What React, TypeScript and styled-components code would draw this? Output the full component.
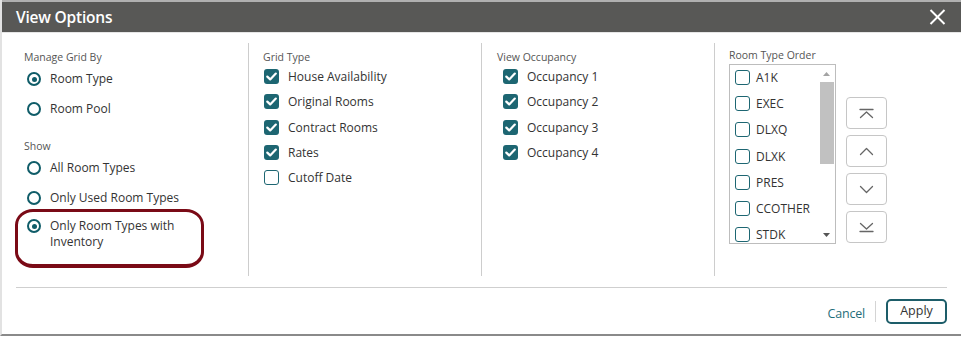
import React from "react";
import styled, { createGlobalStyle } from "styled-components";

const Global = createGlobalStyle`
  html, body { margin: 0; padding: 0; background: #fff; }
  body { font-family: "Open Sans", "Noto Sans", sans-serif; color: #333; }
  * { box-sizing: border-box; }
`;

const Dialog = styled.div`
  width: 961px;
  height: 336px;
  border-left: 2px solid #e2e2e2;
  border-bottom: 2px solid #8a8a8a;
  background: #fff;
  display: flex;
  flex-direction: column;
`;

const Header = styled.div`
  height: 33px;
  flex: none;
  background: #585856;
  border-top: 2px solid #b0b0b0;
  border-bottom: 1px solid #e6e6e6;
  display: flex;
  align-items: center;
  justify-content: space-between;
  padding: 0 15px 0 14px;
`;

const Title = styled.h1`
  margin: 0;
  font-size: 15.5px;
  font-weight: 600;
  color: #fff;
  letter-spacing: -0.2px;
`;

const CloseButton = styled.button`
  border: 0;
  background: none;
  padding: 0;
  width: 17px;
  height: 17px;
  display: flex;
  align-items: center;
  justify-content: center;
  cursor: pointer;
`;

const Body = styled.div`
  padding: 10px 14px 0 14px;
  display: flex;
  flex-direction: column;
`;

const Columns = styled.div`
  display: grid;
  grid-template-columns: 232px 233px 233px 233px;
  height: 233px;
`;

const Column = styled.div<{ $divider?: boolean; $pad: number; $top: number }>`
  border-left: ${(p) => (p.$divider ? "1px solid #cdcdcd" : "none")};
  padding: ${(p) => p.$top}px 0 0 ${(p) => p.$pad}px;
  display: flex;
  flex-direction: column;
`;

const SectionLabel = styled.div<{ $top?: number }>`
  font-size: 10.5px;
  line-height: 13px;
  height: 13px;
  color: #555;
  margin-top: ${(p) => p.$top ?? 0}px;
`;

const RadioRow = styled.label<{ $multi?: boolean }>`
  position: relative;
  display: flex;
  align-items: ${(p) => (p.$multi ? "flex-start" : "center")};
  gap: 9px;
  height: ${(p) => (p.$multi ? "auto" : "30px")};
  padding: ${(p) => (p.$multi ? "5px 0 0 3px" : "0 0 0 3px")};
  font-size: 12px;
  line-height: 16px;
  color: #333;
`;

const RadioCircle = styled.span<{ $checked?: boolean; $multi?: boolean }>`
  flex: none;
  width: 14px;
  height: 14px;
  border-radius: 50%;
  border: 2.4px solid #0f5c68;
  display: flex;
  align-items: center;
  justify-content: center;
  margin-top: ${(p) => (p.$multi ? "1px" : "0")};
  &::after {
    content: "";
    width: 5px;
    height: 5px;
    border-radius: 50%;
    background: ${(p) => (p.$checked ? "#0f5c68" : "transparent")};
  }
`;

const RadioText = styled.span`
  max-width: 140px;
`;

const Annotation = styled.span`
  position: absolute;
  left: -9px;
  top: -4px;
  width: 189px;
  height: 59px;
  border: 3.5px solid #7a0a16;
  border-bottom-width: 4px;
  border-radius: 18px / 16px;
  pointer-events: none;
`;

const CheckRow = styled.label<{ $indent: number }>`
  display: flex;
  align-items: center;
  gap: 9px;
  height: 25.3px;
  padding-left: ${(p) => p.$indent}px;
  font-size: 12px;
  color: #333;
`;

const Box = styled.span<{ $checked?: boolean }>`
  flex: none;
  width: 15px;
  height: 15px;
  border-radius: 3px;
  background: ${(p) => (p.$checked ? "#1d6672" : "#fff")};
  border: ${(p) => (p.$checked ? "none" : "1.5px solid #1d6672")};
  display: flex;
  align-items: center;
  justify-content: center;
`;

const OrderArea = styled.div`
  display: flex;
  margin-top: 2px;
`;

const ListBox = styled.div`
  width: 107px;
  height: 180px;
  border: 1px solid #bdbdbd;
  display: flex;
  background: #fff;
`;

const ListItems = styled.div`
  flex: 1;
  overflow: hidden;
  padding-top: 0;
  margin-top: -1px;
`;

const ListItem = styled.label`
  display: flex;
  align-items: center;
  gap: 6px;
  height: 26.3px;
  padding-left: 5px;
  font-size: 12px;
  color: #333;
`;

const ScrollBar = styled.div`
  width: 17px;
  display: flex;
  flex-direction: column;
  background: #fff;
`;

const ScrollArrow = styled.div`
  height: 17px;
  display: flex;
  align-items: center;
  justify-content: center;
`;

const ScrollTrack = styled.div`
  flex: 1;
  display: flex;
  justify-content: center;
`;

const Thumb = styled.div`
  width: 14px;
  height: 82px;
  background: #c1c1c1;
`;

const MoveButtons = styled.div`
  align-self: flex-end;
  margin: 0 0 1px 10px;
  display: flex;
  flex-direction: column;
  gap: 6px;
`;

const MoveButton = styled.button`
  width: 41px;
  height: 32px;
  border: 1px solid #c6c6c6;
  border-radius: 4px;
  background: #fff;
  display: flex;
  align-items: center;
  justify-content: center;
  padding: 0;
`;

const Separator = styled.hr`
  margin: 11px 0 0 0;
  border: 0;
  border-top: 1px solid #cfcfcf;
  height: 0;
`;

const Footer = styled.div`
  height: 46px;
  display: flex;
  align-items: center;
  justify-content: flex-end;
  padding-right: 14px;
`;

const CancelLink = styled.a`
  font-size: 12.5px;
  color: #1f6e7a;
  margin-top: 5px;
  text-decoration: none;
  letter-spacing: -0.2px;
`;

const FooterDivider = styled.span`
  width: 1px;
  height: 21px;
  background: #d4d4d4;
  margin: 0 10px;
`;

const ApplyButton = styled.button`
  width: 61px;
  height: 25px;
  border: 2px solid #1d5d69;
  border-radius: 5px;
  background: #fff;
  font-family: inherit;
  font-size: 12.5px;
  color: #333;
  padding: 0 0 2px 0;
`;

const Check = () => (
  <svg width="11" height="9" viewBox="0 0 11 9">
    <polyline points="1.3,4.6 4.2,7.4 9.8,1.6" fill="none" stroke="#fff" strokeWidth="2.2" strokeLinecap="round" strokeLinejoin="round" />
  </svg>
);

const Tri = ({ up }: { up?: boolean }) => (
  <svg width="7" height="4" viewBox="0 0 7 4">
    <polygon points={up ? "0,4 7,4 3.5,0" : "0,0 7,0 3.5,4"} fill={up ? "#a3a3a3" : "#555"} />
  </svg>
);

type Mv = "top" | "up" | "down" | "bottom";
const MoveIcon = ({ kind }: { kind: Mv }) => {
  const s = { fill: "none", stroke: "#666", strokeWidth: 1.3, strokeLinecap: "round" as const, strokeLinejoin: "round" as const };
  return (
    <svg width="15" height="11" viewBox="0 0 15 11">
      {kind === "top" && (
        <>
          <line x1="1" y1="1.5" x2="14" y2="1.5" {...s} />
          <polyline points="1.5,9.5 7.5,4 13.5,9.5" {...s} />
        </>
      )}
      {kind === "up" && <polyline points="1.5,8.5 7.5,2.5 13.5,8.5" {...s} />}
      {kind === "down" && <polyline points="1.5,2.5 7.5,8.5 13.5,2.5" {...s} />}
      {kind === "bottom" && (
        <>
          <polyline points="1.5,1.5 7.5,7 13.5,1.5" {...s} />
          <line x1="1" y1="9.5" x2="14" y2="9.5" {...s} />
        </>
      )}
    </svg>
  );
};

const gridTypes = [
  { label: "House Availability", checked: true },
  { label: "Original Rooms", checked: true },
  { label: "Contract Rooms", checked: true },
  { label: "Rates", checked: true },
  { label: "Cutoff Date", checked: false },
];

const occupancies = ["Occupancy 1", "Occupancy 2", "Occupancy 3", "Occupancy 4"];
const roomTypes = ["A1K", "EXEC", "DLXQ", "DLXK", "PRES", "CCOTHER", "STDK"];

export default function App() {
  return (
    <>
      <Global />
      <Dialog>
        <Header>
          <Title>View Options</Title>
          <CloseButton aria-label="Close">
            <svg width="17" height="16" viewBox="0 0 17 16">
              <line x1="1.5" y1="1" x2="15.5" y2="15" stroke="#fff" strokeWidth="2" />
              <line x1="15.5" y1="1" x2="1.5" y2="15" stroke="#fff" strokeWidth="2" />
            </svg>
          </CloseButton>
        </Header>
        <Body>
          <Columns>
            <Column $pad={8} $top={8}>
              <SectionLabel>Manage Grid By</SectionLabel>
              <RadioRow>
                <RadioCircle $checked />
                <RadioText>Room Type</RadioText>
              </RadioRow>
              <RadioRow>
                <RadioCircle />
                <RadioText>Room Pool</RadioText>
              </RadioRow>
              <SectionLabel $top={16}>Show</SectionLabel>
              <RadioRow>
                <RadioCircle />
                <RadioText>All Room Types</RadioText>
              </RadioRow>
              <RadioRow>
                <RadioCircle />
                <RadioText>Only Used Room Types</RadioText>
              </RadioRow>
              <RadioRow $multi>
                <RadioCircle $checked $multi />
                <RadioText>Only Room Types with Inventory</RadioText>
                <Annotation />
              </RadioRow>
            </Column>
            <Column $divider $pad={14} $top={8}>
              <SectionLabel>Grid Type</SectionLabel>
              {gridTypes.map((g) => (
                <CheckRow key={g.label} $indent={1}>
                  <Box $checked={g.checked}>{g.checked && <Check />}</Box>
                  {g.label}
                </CheckRow>
              ))}
            </Column>
            <Column $divider $pad={15} $top={8}>
              <SectionLabel>View Occupancy</SectionLabel>
              {occupancies.map((o) => (
                <CheckRow key={o} $indent={6}>
                  <Box $checked>
                    <Check />
                  </Box>
                  {o}
                </CheckRow>
              ))}
            </Column>
            <Column $divider $pad={14} $top={6}>
              <SectionLabel>Room Type Order</SectionLabel>
              <OrderArea>
                <ListBox>
                  <ListItems>
                    {roomTypes.map((r) => (
                      <ListItem key={r}>
                        <Box />
                        {r}
                      </ListItem>
                    ))}
                  </ListItems>
                  <ScrollBar>
                    <ScrollArrow>
                      <Tri up />
                    </ScrollArrow>
                    <ScrollTrack>
                      <Thumb />
                    </ScrollTrack>
                    <ScrollArrow>
                      <Tri />
                    </ScrollArrow>
                  </ScrollBar>
                </ListBox>
                <MoveButtons>
                  <MoveButton aria-label="Move to top"><MoveIcon kind="top" /></MoveButton>
                  <MoveButton aria-label="Move up"><MoveIcon kind="up" /></MoveButton>
                  <MoveButton aria-label="Move down"><MoveIcon kind="down" /></MoveButton>
                  <MoveButton aria-label="Move to bottom"><MoveIcon kind="bottom" /></MoveButton>
                </MoveButtons>
              </OrderArea>
            </Column>
          </Columns>
          <Separator />
        </Body>
        <Footer>
          <CancelLink href="#">Cancel</CancelLink>
          <FooterDivider />
          <ApplyButton>Apply</ApplyButton>
        </Footer>
      </Dialog>
    </>
  );
}
